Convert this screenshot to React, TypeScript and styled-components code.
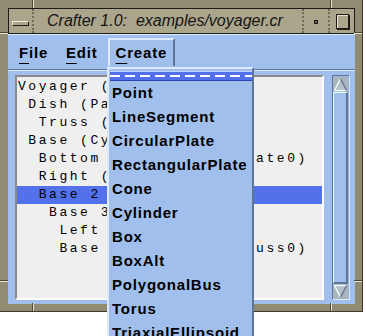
import React from "react";
import styled, { createGlobalStyle, css } from "styled-components";

const BLUE = "#a0bfec";
const LIGHT = "#dbeaff";
const DARK = "#5f7698";
const BEIGE = "#b1ab8f";
const INK = "#1c1c16";

const Global = createGlobalStyle`
  html, body { margin: 0; padding: 0; background: #ffffff; overflow: hidden; }
  body { width: 366px; height: 336px; }
`;

const Screen = styled.div`
  position: relative;
  width: 366px;
  height: 336px;
  overflow: hidden;
  background: #ffffff;
`;

const Frame = styled.div`
  position: relative;
  width: 363px;
  height: 312px;
  box-sizing: border-box;
  padding: 8px 7px 7px 8px;
  background-color: ${BEIGE};
  background-image: radial-gradient(circle, rgba(84, 80, 60, 0.55) 0.6px, transparent 0.9px);
  background-size: 2px 2px;
  border-right: 1px solid #3d3b30;
  border-bottom: 1px solid #3d3b30;
  display: flex;
  flex-direction: column;
`;

const Notch = styled.span<{ $vertical?: boolean }>`
  position: absolute;
  ${(p) =>
    p.$vertical
      ? css`
          width: 1px;
          height: 8px;
          border-right: 1px solid #e6e2cc;
          background: #4a4738;
        `
      : css`
          width: 8px;
          height: 1px;
          border-bottom: 1px solid #e6e2cc;
          background: #4a4738;
        `}
`;

const TitleBar = styled.div`
  height: 26px;
  box-sizing: border-box;
  border: 1px solid ${INK};
  background: #aba68b;
  display: flex;
  align-items: stretch;
`;

const TitleButton = styled.div<{ $sep?: "left" | "right" }>`
  width: 24px;
  flex: none;
  display: flex;
  align-items: center;
  justify-content: center;
  ${(p) =>
    p.$sep === "right"
      ? css`border-right: 2px dotted #6f6b57; width: 23px;`
      : p.$sep === "left"
      ? css`border-left: 2px dotted #6f6b57;`
      : ""}
`;

const MenuGlyph = styled.span`
  width: 15px;
  height: 3px;
  margin-top: 4px;
  background: #aba68b;
  border-top: 1px solid #f2efdd;
  border-left: 1px solid #f2efdd;
  border-right: 1px solid ${INK};
  border-bottom: 1px solid ${INK};
`;

const MinGlyph = styled.span`
  width: 2px;
  height: 2px;
  margin-top: 2px;
  background: #6a6654;
  border: 1px solid ${INK};
`;

const MaxGlyph = styled.span`
  width: 11px;
  height: 13px;
  margin-left: 1px;
  background: #aba68b;
  border: 1px solid ${INK};
  box-shadow: 1px 1px 0 ${INK}, inset 1px 1px 0 #e8e4d0;
`;

const TitleText = styled.div`
  flex: 1;
  padding-left: 13px;
  font-family: "Liberation Sans", Arial, sans-serif;
  font-style: italic;
  font-size: 16px;
  line-height: 24px;
  color: #141414;
  white-space: pre;
  overflow: hidden;
`;

const Client = styled.div`
  flex: 1;
  background: ${BLUE};
  display: flex;
  flex-direction: column;
  min-height: 0;
`;

const MenuBar = styled.div`
  display: flex;
  gap: 2px;
  padding: 3px 3px 2px;
  border-top: 1px solid ${LIGHT};
  border-bottom: 1px solid ${DARK};
`;

const MenuButton = styled.div<{ $active?: boolean }>`
  height: 29px;
  box-sizing: border-box;
  padding: 0 6px;
  border: 2px solid transparent;
  font-family: "Liberation Sans", Arial, sans-serif;
  font-weight: bold;
  font-size: 15px;
  letter-spacing: 0.8px;
  line-height: 25px;
  color: #000;
  ${(p) =>
    p.$active &&
    css`
      border-color: ${LIGHT} ${DARK} transparent ${LIGHT};
    `}
`;

const Mnemonic = styled.span`
  text-decoration: underline;
  text-decoration-thickness: 1px;
  text-underline-offset: 5px;
`;

const Body = styled.div`
  flex: 1;
  display: flex;
  gap: 8px;
  padding: 4px 5px 4px 7px;
  border-top: 1px solid ${LIGHT};
  min-height: 0;
`;

const List = styled.div`
  flex: 1;
  box-sizing: border-box;
  border: 2px solid;
  border-color: #8b8b8b #ffffff #ffffff #8b8b8b;
  background: #efefef;
  padding-top: 1px;
  overflow: hidden;
`;

const Row = styled.div<{ $selected?: boolean }>`
  height: 18px;
  line-height: 18px;
  padding-left: 1px;
  white-space: pre;
  font-family: "Liberation Mono", "Courier New", monospace;
  font-size: 13px;
  letter-spacing: 2.55px;
  color: #000;
  background: ${(p) => (p.$selected ? "#5371eb" : "transparent")};
`;

const ScrollBar = styled.div`
  width: 18px;
  flex: none;
  box-sizing: border-box;
  border: 1px solid;
  border-color: ${DARK} ${LIGHT} ${LIGHT} ${DARK};
  background: #98b6e2;
  padding: 1px 1px 0 0;
  display: flex;
  flex-direction: column;
`;

const Arrow = styled.svg`
  display: block;
  flex: none;
`;

const Thumb = styled.div`
  flex: 1;
  box-sizing: border-box;
  border-style: solid;
  border-width: 1px 2px 2px 1px;
  border-color: #e6ffff ${DARK} ${DARK} #e6ffff;
  background: ${BLUE};
`;

const Dropdown = styled.div`
  position: absolute;
  left: 107px;
  top: 67px;
  width: 147px;
  height: 300px;
  box-sizing: border-box;
  background: ${BLUE};
  border-style: solid;
  border-width: 2px 2px 0 2px;
  border-color: ${LIGHT} ${DARK} ${DARK} ${LIGHT};
`;

const TearOff = styled.div`
  position: relative;
  height: 10px;
  box-sizing: border-box;
  margin: 2px 0 0 1px;
  background: #5371eb;
  border-top: 1px solid #c3d3ff;
  border-bottom: 1px solid #2c44b0;
  &::after {
    content: "";
    position: absolute;
    left: 0;
    right: 0;
    top: 3px;
    height: 2px;
    background: repeating-linear-gradient(90deg, #ffffff 0 10px, transparent 10px 15px);
  }
`;

const Item = styled.div`
  height: 24px;
  line-height: 24px;
  padding-left: 3px;
  font-family: "Liberation Sans", Arial, sans-serif;
  font-weight: bold;
  font-size: 15px;
  letter-spacing: 0.8px;
  color: #000;
  white-space: nowrap;
`;

const rows: { text: string; selected?: boolean }[] = [
  { text: "Voyager (Assembly0)" },
  { text: " Dish (Paraboloid0)" },
  { text: "  Truss (Assembly1)" },
  { text: " Base (Cylinder0)" },
  { text: "  Bottom (RectangularPlate0)" },
  { text: "  Right (Cylinder1)" },
  { text: "  Base 2", selected: true },
  { text: "   Base 3" },
  { text: "    Left (Box0)" },
  { text: "    Base (RectangularTruss0)" },
];

const items = [
  "Point",
  "LineSegment",
  "CircularPlate",
  "RectangularPlate",
  "Cone",
  "Cylinder",
  "Box",
  "BoxAlt",
  "PolygonalBus",
  "Torus",
  "TriaxialEllipsoid",
];

const UpArrow = () => (
  <Arrow width="15" height="15" viewBox="0 0 15 15">
    <rect x="0" y="0" width="15" height="15" fill="#acb4bc" />
    <polygon points="7.5,1.5 13.5,13.5 1.5,13.5" fill="#b6bec6" />
    <line x1="7.5" y1="1.5" x2="1.5" y2="13.5" stroke="#e6ffff" strokeWidth="1.4" />
    <line x1="1.5" y1="13.5" x2="13.5" y2="13.5" stroke="#e6ffff" strokeWidth="1.4" />
    <line x1="7.5" y1="1.5" x2="13.5" y2="13.5" stroke={DARK} strokeWidth="1.4" />
  </Arrow>
);

const DownArrow = () => (
  <Arrow width="15" height="15" viewBox="0 0 15 15">
    <rect x="0" y="0" width="15" height="15" fill="#acb4bc" />
    <polygon points="1.5,1.5 13.5,1.5 7.5,13.5" fill="#b6bec6" />
    <line x1="1.5" y1="1.5" x2="13.5" y2="1.5" stroke="#e6ffff" strokeWidth="1.4" />
    <line x1="1.5" y1="1.5" x2="7.5" y2="13.5" stroke="#e6ffff" strokeWidth="1.4" />
    <line x1="13.5" y1="1.5" x2="7.5" y2="13.5" stroke={DARK} strokeWidth="1.4" />
  </Arrow>
);

export default function App() {
  return (
    <Screen>
      <Global />
      <Frame>
        <Notch $vertical style={{ left: 32, top: 0 }} />
        <Notch $vertical style={{ left: 330, top: 0 }} />
        <Notch $vertical style={{ left: 32, bottom: 0 }} />
        <Notch $vertical style={{ left: 330, bottom: 0 }} />
        <Notch style={{ left: 0, top: 32 }} />
        <Notch style={{ right: 0, top: 32 }} />
        <Notch style={{ left: 0, top: 280 }} />
        <Notch style={{ right: 0, top: 280 }} />
        <TitleBar>
          <TitleButton $sep="right">
            <MenuGlyph />
          </TitleButton>
          <TitleText>{"Crafter 1.0:  examples/voyager.cr"}</TitleText>
          <TitleButton $sep="left">
            <MinGlyph />
          </TitleButton>
          <TitleButton $sep="left">
            <MaxGlyph />
          </TitleButton>
        </TitleBar>
        <Client>
          <MenuBar>
            <MenuButton>
              <Mnemonic>F</Mnemonic>ile
            </MenuButton>
            <MenuButton>
              <Mnemonic>E</Mnemonic>dit
            </MenuButton>
            <MenuButton $active>
              <Mnemonic>C</Mnemonic>reate
            </MenuButton>
          </MenuBar>
          <Body>
            <List>
              {rows.map((r, i) => (
                <Row key={i} $selected={r.selected}>
                  {r.text}
                </Row>
              ))}
            </List>
            <ScrollBar>
              <UpArrow />
              <Thumb />
              <DownArrow />
            </ScrollBar>
          </Body>
        </Client>
      </Frame>
      <Dropdown>
        <TearOff />
        {items.map((it) => (
          <Item key={it}>{it}</Item>
        ))}
      </Dropdown>
    </Screen>
  );
}
